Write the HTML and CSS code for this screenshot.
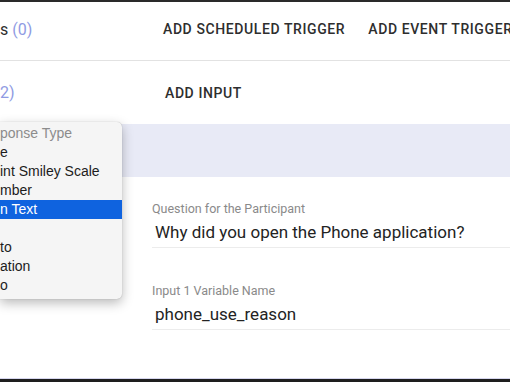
FILE: index.html
```html
<!DOCTYPE html>
<html lang="en">
<head>
    <meta charset="UTF-8">
    <title>Study Editor</title>
    <link rel="stylesheet" href="styles.css">
</head>
<body>
    <div class="screen">
        <div class="section-row">
            <h2 class="section-title">s <span class="count">(0)</span></h2>
            <div class="actions">
                <button class="text-button">Add Scheduled Trigger</button>
                <button class="text-button">Add Event Trigger</button>
            </div>
        </div>

        <div class="section-row inputs-row">
            <h2 class="section-title"><span class="count">2)</span></h2>
            <div class="actions">
                <button class="text-button">Add Input</button>
            </div>
        </div>

        <div class="input-header"></div>

        <div class="input-form">
            <div class="field">
                <label class="field-label">Question for the Participant</label>
                <div class="field-value">Why did you open the Phone application?</div>
            </div>
            <div class="field">
                <label class="field-label">Input 1 Variable Name</label>
                <div class="field-value">phone_use_reason</div>
            </div>
        </div>

        <!-- native select menu, cut off at the left edge -->
        <ul class="select-menu">
            <li class="menu-item disabled">ponse Type</li>
            <li class="menu-item">e</li>
            <li class="menu-item">int Smiley Scale</li>
            <li class="menu-item">mber</li>
            <li class="menu-item selected">n Text</li>
            <li class="menu-item"></li>
            <li class="menu-item">to</li>
            <li class="menu-item">ation</li>
            <li class="menu-item">o</li>
        </ul>
    </div>
</body>
</html>
```

FILE: styles.css
```css
/* Global Styles */
body {
    margin: 0;
    padding: 0;
    background-color: #ffffff;
    font-family: Roboto, "Liberation Sans", sans-serif;
    color: #2e2e2e;
}

.screen {
    position: relative;
    width: 510px;
    height: 382px;
    box-sizing: border-box;
    border-top: 2px solid #2a2a2a;
    border-bottom: 3px solid #1e1e1e;
    box-shadow: inset 0 -1px 0 #d6d6ee;
    overflow: hidden;
}

/* Section rows */
.section-row {
    display: flex;
    align-items: center;
    height: 54px;
    padding-bottom: 4px;
    border-bottom: 1px solid #e2e2e2;
}

.inputs-row {
    height: 63px;
    padding-bottom: 0;
    border-bottom: none;
}

.section-title {
    flex-shrink: 0;
    width: 163px;
    margin: 0;
    font-size: 16px;
    font-weight: 400;
    white-space: nowrap;
}

.count {
    color: #8f9be3;
}

.actions {
    display: flex;
    gap: 23px;
}

.text-button {
    padding: 0;
    border: none;
    background: none;
    font-family: Roboto, "Liberation Sans", sans-serif;
    font-size: 14px;
    font-weight: 500;
    letter-spacing: 0.6px;
    text-transform: uppercase;
    color: #2e2e2e;
    white-space: nowrap;
}

.inputs-row .text-button {
    margin-left: 2px;
}

/* Input card */
.input-header {
    height: 53px;
    background-color: #e8eaf6;
}

.input-form {
    padding: 24px 0 0 152px;
}

.field {
    margin-bottom: 35px;
}

.field-label {
    display: block;
    font-size: 12.5px;
    color: #8a8a8a;
    line-height: 16px;
}

.field-value {
    padding: 4px 0 4px 3px;
    font-size: 17px;
    line-height: 22px;
    color: #232323;
    border-bottom: 1px solid #ececec;
    white-space: nowrap;
}

/* Select menu */
.select-menu {
    position: absolute;
    left: 0;
    top: 120px;
    width: 122px;
    margin: 0;
    padding: 2px 0 4px;
    list-style: none;
    background-color: #f5f5f5;
    border-radius: 0 5px 5px 0;
    box-shadow: 0 4px 12px rgba(0, 0, 0, 0.28), 0 0 1px rgba(0, 0, 0, 0.3);
    font-family: "Liberation Sans", Arial, sans-serif;
    font-size: 14px;
}

.menu-item {
    height: 19px;
    line-height: 19px;
    color: #1c1c1c;
    white-space: nowrap;
}

.menu-item.disabled {
    color: #8c8c8c;
}

.menu-item.selected {
    background-color: #0f63df;
    color: #ffffff;
}
```
